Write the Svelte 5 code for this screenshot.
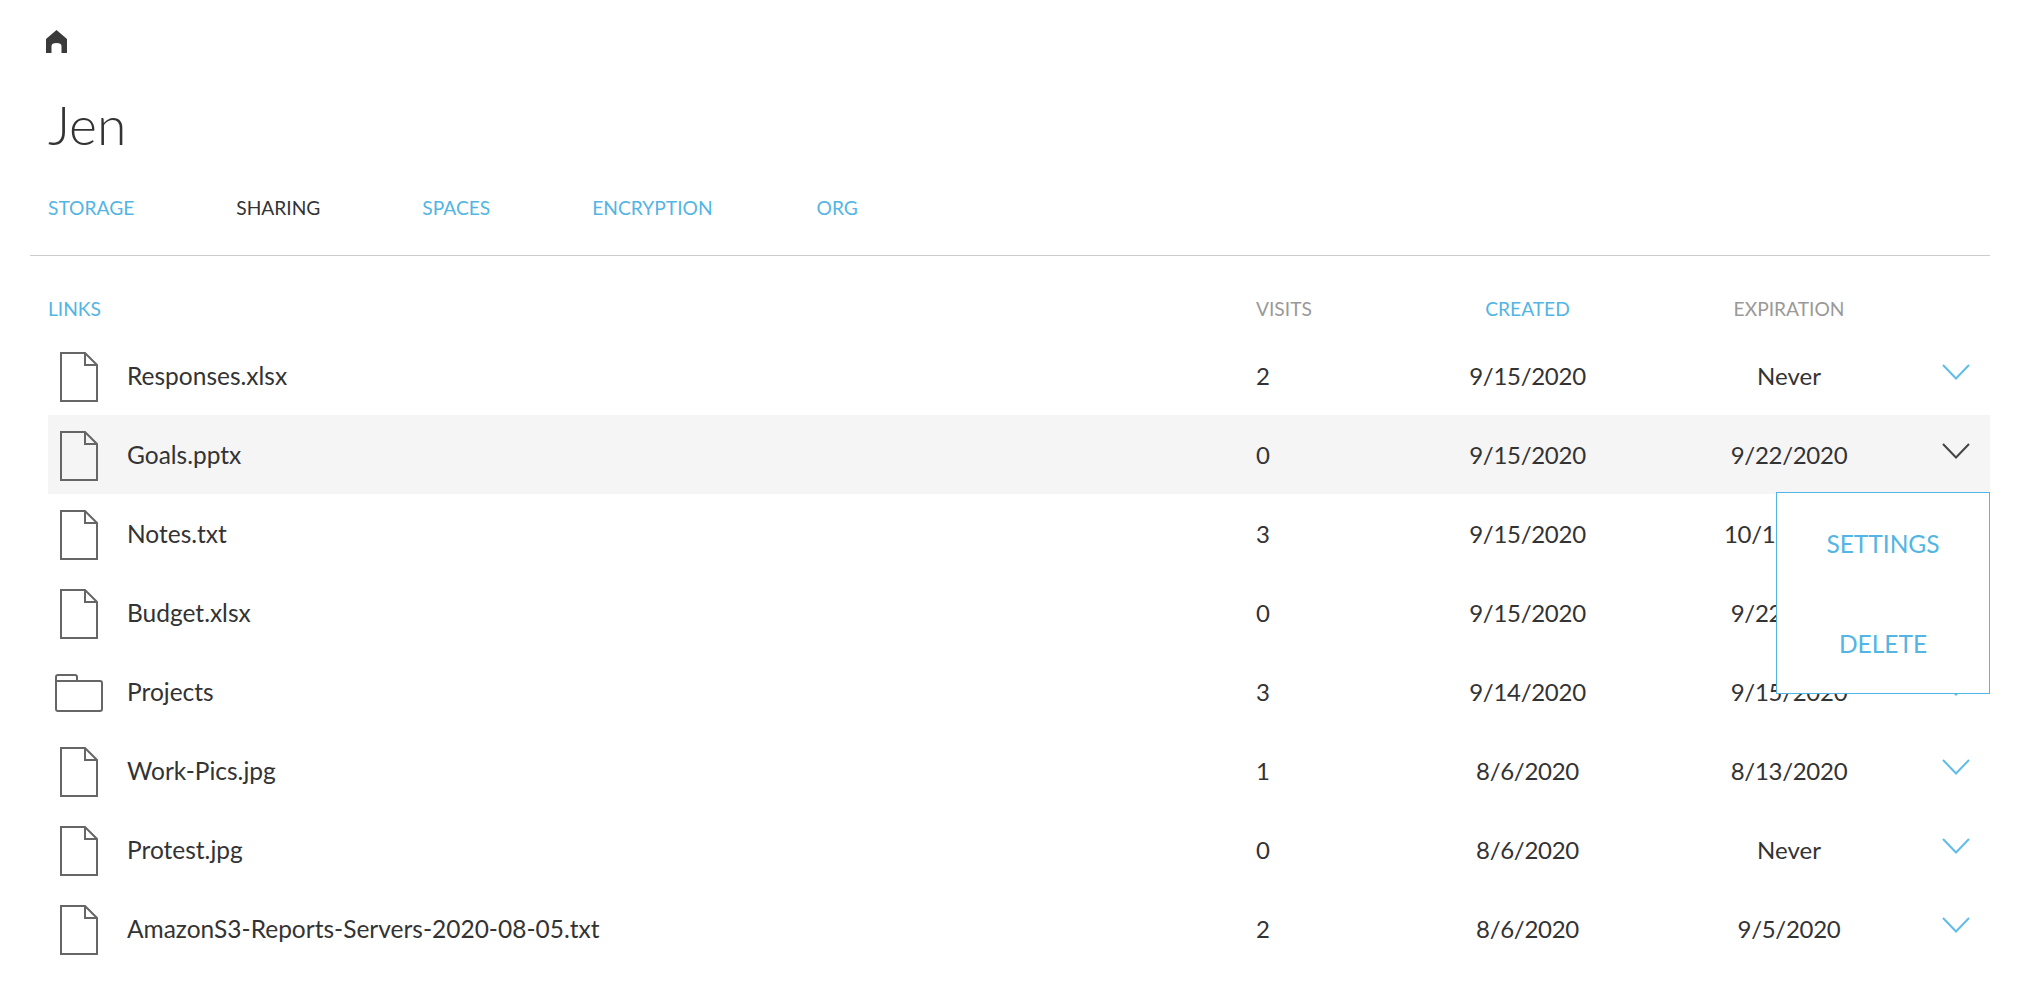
<script>
  const tabs = [
    { label: 'STORAGE' },
    { label: 'SHARING', active: true },
    { label: 'SPACES' },
    { label: 'ENCRYPTION' },
    { label: 'ORG' }
  ];

  const rows = [
    { name: 'Responses.xlsx', type: 'file', visits: 2, created: '9/15/2020', expires: 'Never' },
    { name: 'Goals.pptx', type: 'file', visits: 0, created: '9/15/2020', expires: '9/22/2020', hover: true, open: true },
    { name: 'Notes.txt', type: 'file', visits: 3, created: '9/15/2020', expires: '10/15/2020' },
    { name: 'Budget.xlsx', type: 'file', visits: 0, created: '9/15/2020', expires: '9/22/2020' },
    { name: 'Projects', type: 'folder', visits: 3, created: '9/14/2020', expires: '9/15/2020' },
    { name: 'Work-Pics.jpg', type: 'file', visits: 1, created: '8/6/2020', expires: '8/13/2020' },
    { name: 'Protest.jpg', type: 'file', visits: 0, created: '8/6/2020', expires: 'Never' },
    { name: 'AmazonS3-Reports-Servers-2020-08-05.txt', type: 'file', visits: 2, created: '8/6/2020', expires: '9/5/2020' }
  ];
</script>

<div class="page">
  <a class="home" href="#home" aria-label="Home">
    <svg width="21" height="23" viewBox="0 0 21 23">
      <path fill="#3a3a3a" d="M10.5 0 L21 9 V23 H15.5 V16 Q15.5 13 10.5 13 Q5.5 13 5.5 16 V23 H0 V9 Z" />
    </svg>
  </a>

  <h1>Jen</h1>

  <nav>
    {#each tabs as tab}
      <a href="#tab" class:active={tab.active}>{tab.label}</a>
    {/each}
  </nav>

  <section>
    <div class="grid head">
      <span class="links">LINKS</span>
      <span class="visits">VISITS</span>
      <span class="center sorted">CREATED</span>
      <span class="center">EXPIRATION</span>
      <span></span>
    </div>

    {#each rows as row}
      <div class="grid row" class:hover={row.hover}>
        <span class="name">
          <span class="icon">
            {#if row.type === 'file'}
              <svg width="38" height="50" viewBox="0 0 38 50" fill="none" stroke="#666" stroke-width="2">
                <path d="M1 1 H25 L37 13 V49 H1 Z" />
                <path d="M25 1 V13 H37" />
              </svg>
            {:else}
              <svg width="48" height="38" viewBox="0 0 48 38" fill="none" stroke="#666" stroke-width="2">
                <path d="M1 35 V3 Q1 1 3 1 H20 Q22 1 22 3 V7" />
                <path d="M1 35 Q1 37 3 37 H45 Q47 37 47 35 V9 Q47 7 45 7 H1" />
              </svg>
            {/if}
          </span>
          {row.name}
        </span>
        <span class="visits">{row.visits}</span>
        <span class="center date">{row.created}</span>
        <span class="center" class:date={row.expires !== 'Never'}>{row.expires}</span>
        <span class="chev" class:dark={row.hover}>
          <svg width="28" height="16" viewBox="0 0 28 16" fill="none" stroke="currentColor" stroke-width="2">
            <polyline points="1,1 14,14.5 27,1" />
          </svg>
        </span>

        {#if row.open}
          <div class="menu">
            <a href="#settings">SETTINGS</a>
            <a href="#delete">DELETE</a>
          </div>
        {/if}
      </div>
    {/each}
  </section>
</div>

<style>
  :global(body) {
    background: #fff;
    color: #333;
    font-family: Lato, "Open Sans", sans-serif;
  }

  .page {
    padding: 30px 40px 0 30px;
  }

  .home {
    display: block;
    margin-left: 16px;
    height: 23px;
  }
  .home svg { display: block; }

  h1 {
    margin: 36px 0 0 18px;
    font-size: 53.5px;
    line-height: 70px;
    font-weight: 300;
    color: #333;
  }

  nav {
    display: flex;
    gap: 102px;
    padding: 0 0 36px 18px;
    margin-top: 37px;
    border-bottom: 1px solid #ccc;
    font-size: 19.2px;
    line-height: 23px;
  }
  nav a {
    display: block;
    color: #52b5e3;
    text-decoration: none;
  }
  nav a.active { color: #333; }
  nav a:last-child { margin-left: 2px; }

  section {
    padding-left: 18px;
  }

  .grid {
    display: grid;
    grid-template-columns: 1207px 135px 275px 248px 77px;
    align-items: center;
  }

  .head {
    height: 80px;
    padding-top: 25px;
    box-sizing: border-box;
    font-size: 19.2px;
    color: #999;
  }
  .links, .sorted { color: #52b5e3; }

  .row {
    position: relative;
    height: 79px;
    font-size: 24px;
    color: #333;
  }
  .row.hover { background: #f5f5f5; }

  .name {
    display: flex;
    align-items: center;
    font-size: 24.5px;
  }
  .icon {
    display: flex;
    justify-content: center;
    width: 50px;
    margin: 2px 23px 0 6px;
  }
  .icon svg { display: block; }

  .visits { padding-left: 1px; }
  .center { text-align: center; }
  .date { letter-spacing: -0.29px; }

  .chev {
    display: flex;
    justify-content: flex-end;
    padding-right: 20px;
    margin-top: -8px;
    color: #5fbde8;
  }
  .chev.dark { color: #444; }
  .chev svg { display: block; }

  .menu {
    position: absolute;
    top: 77px;
    right: 0;
    width: 214px;
    height: 202px;
    box-sizing: border-box;
    border: 1px solid #52b5e3;
    background: #fff;
    display: flex;
    flex-direction: column;
    z-index: 2;
  }
  .menu a {
    display: flex;
    flex: 1;
    align-items: center;
    justify-content: center;
    color: #52b5e3;
    text-decoration: none;
    font-size: 24.5px;
  }
</style>
